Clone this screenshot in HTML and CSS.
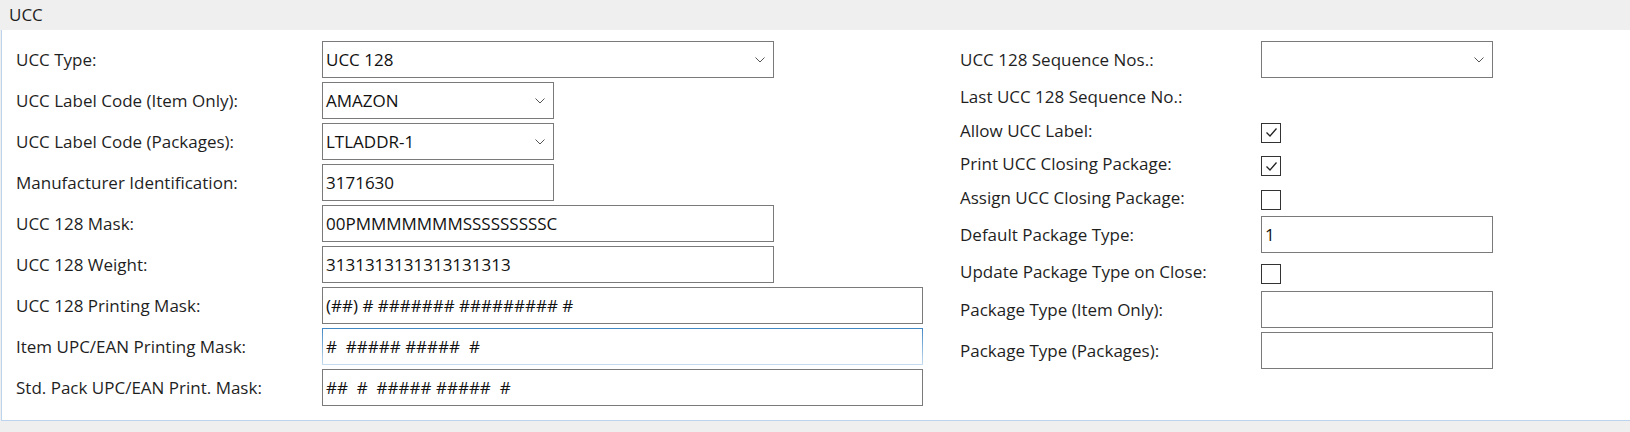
FILE: index.html
```html
<!DOCTYPE html>
<html>
<head>
<meta charset="utf-8">
<link rel="stylesheet" href="styles.css">
</head>
<body>
<div class="section-header">UCC</div>
<div class="panel">
  <div class="col col-left">
    <div class="field">
      <span class="label">UCC Type:</span>
      <div class="input select w-md"><span class="val">UCC 128</span><svg class="chev" width="10" height="6" viewBox="0 0 10 6"><path d="M0.5 0.5 L5 5 L9.5 0.5" fill="none" stroke="#555" stroke-width="1"/></svg></div>
    </div>
    <div class="field">
      <span class="label">UCC Label Code (Item Only):</span>
      <div class="input select w-sm"><span class="val">AMAZON</span><svg class="chev" width="10" height="6" viewBox="0 0 10 6"><path d="M0.5 0.5 L5 5 L9.5 0.5" fill="none" stroke="#555" stroke-width="1"/></svg></div>
    </div>
    <div class="field">
      <span class="label">UCC Label Code (Packages):</span>
      <div class="input select w-sm"><span class="val">LTLADDR-1</span><svg class="chev" width="10" height="6" viewBox="0 0 10 6"><path d="M0.5 0.5 L5 5 L9.5 0.5" fill="none" stroke="#555" stroke-width="1"/></svg></div>
    </div>
    <div class="field">
      <span class="label">Manufacturer Identification:</span>
      <div class="input w-sm"><span class="val">3171630</span></div>
    </div>
    <div class="field">
      <span class="label">UCC 128 Mask:</span>
      <div class="input w-md"><span class="val">00PMMMMMMMSSSSSSSSSC</span></div>
    </div>
    <div class="field">
      <span class="label">UCC 128 Weight:</span>
      <div class="input w-md"><span class="val">3131313131313131313</span></div>
    </div>
    <div class="field">
      <span class="label">UCC 128 Printing Mask:</span>
      <div class="input w-lg"><span class="val mask">(##) # ####### ######### #</span></div>
    </div>
    <div class="field">
      <span class="label">Item UPC/EAN Printing Mask:</span>
      <div class="input w-lg focused"><span class="val mask">#&nbsp; ##### #####&nbsp; #</span></div>
    </div>
    <div class="field">
      <span class="label">Std. Pack UPC/EAN Print. Mask:</span>
      <div class="input w-lg"><span class="val mask">##&nbsp; #&nbsp; ##### #####&nbsp; #</span></div>
    </div>
  </div>
  <div class="col col-right">
    <div class="field">
      <span class="label label-r">UCC 128 Sequence Nos.:</span>
      <div class="input select w-sm"><span class="val"></span><svg class="chev" width="10" height="6" viewBox="0 0 10 6"><path d="M0.5 0.5 L5 5 L9.5 0.5" fill="none" stroke="#555" stroke-width="1"/></svg></div>
    </div>
    <div class="field row-check">
      <span class="label label-r">Last UCC 128 Sequence No.:</span>
    </div>
    <div class="field row-check">
      <span class="label label-r">Allow UCC Label:</span>
      <div class="checkbox"><svg width="17" height="17" viewBox="0 0 17 17"><path d="M3.5 8.5 L7 12 L13.5 4.5" fill="none" stroke="#222" stroke-width="1.3"/></svg></div>
    </div>
    <div class="field row-check">
      <span class="label label-r">Print UCC Closing Package:</span>
      <div class="checkbox"><svg width="17" height="17" viewBox="0 0 17 17"><path d="M3.5 8.5 L7 12 L13.5 4.5" fill="none" stroke="#222" stroke-width="1.3"/></svg></div>
    </div>
    <div class="field row-check">
      <span class="label label-r">Assign UCC Closing Package:</span>
      <div class="checkbox"></div>
    </div>
    <div class="field">
      <span class="label label-r">Default Package Type:</span>
      <div class="input w-sm"><span class="val">1</span></div>
    </div>
    <div class="field row-check">
      <span class="label label-r">Update Package Type on Close:</span>
      <div class="checkbox"></div>
    </div>
    <div class="field">
      <span class="label label-r">Package Type (Item Only):</span>
      <div class="input w-sm"><span class="val"></span></div>
    </div>
    <div class="field">
      <span class="label label-r">Package Type (Packages):</span>
      <div class="input w-sm"><span class="val"></span></div>
    </div>
  </div>
</div>
</body>
</html>
```
FILE: styles.css
```css
html, body {
  margin: 0;
  padding: 0;
}
body {
  background: #efefef;
  font-family: "Open Sans", "Noto Sans", "Liberation Sans", sans-serif;
  font-size: 17px;
  color: #1f1f1f;
  width: 1630px;
  height: 432px;
  overflow: hidden;
}
.section-header {
  height: 30px;
  line-height: 29px;
  padding-left: 9px;
  background: #efefef;
  font-size: 17px;
}
.panel {
  background: #fff;
  margin-left: 1px;
  border-left: 1px solid #bcd4ee;
  border-bottom: 1px solid #bcd4ee;
  height: 379px;
  padding: 11px 0 0 14px;
  display: flex;
  align-items: flex-start;
}
.col {
  display: flex;
  flex-direction: column;
  gap: 4px;
}
.col-left {
  width: 907px;
}
.col-right {
  margin-left: 37px;
}
.field {
  display: flex;
  align-items: center;
  min-height: 37px;
}
.row-check {
  min-height: 29.5px;
  height: 29.5px;
}
.label {
  width: 306px;
  flex: none;
  white-space: nowrap;
}
.label-r {
  width: 301px;
}
.input {
  box-sizing: border-box;
  height: 37px;
  border: 1px solid #7a7a7a;
  background: #fff;
  display: flex;
  align-items: center;
  padding-left: 3px;
  position: relative;
  flex: none;
}
.input.focused {
  border-image: linear-gradient(#3f86c5, #c8ddef) 1;
}
.w-sm { width: 232px; }
.w-md { width: 452px; }
.w-lg { width: 601px; }
.val {
  white-space: pre;
  color: #111;
}
.mask {
  letter-spacing: 0;
}
.chev {
  position: absolute;
  right: 8px;
  top: 15px;
}
.checkbox {
  box-sizing: border-box;
  width: 20px;
  height: 20px;
  border: 1px solid #333;
  margin-top: 5px;
  display: flex;
  align-items: center;
  justify-content: center;
  background: #fff;
}
.checkbox svg {
  display: block;
}
```
